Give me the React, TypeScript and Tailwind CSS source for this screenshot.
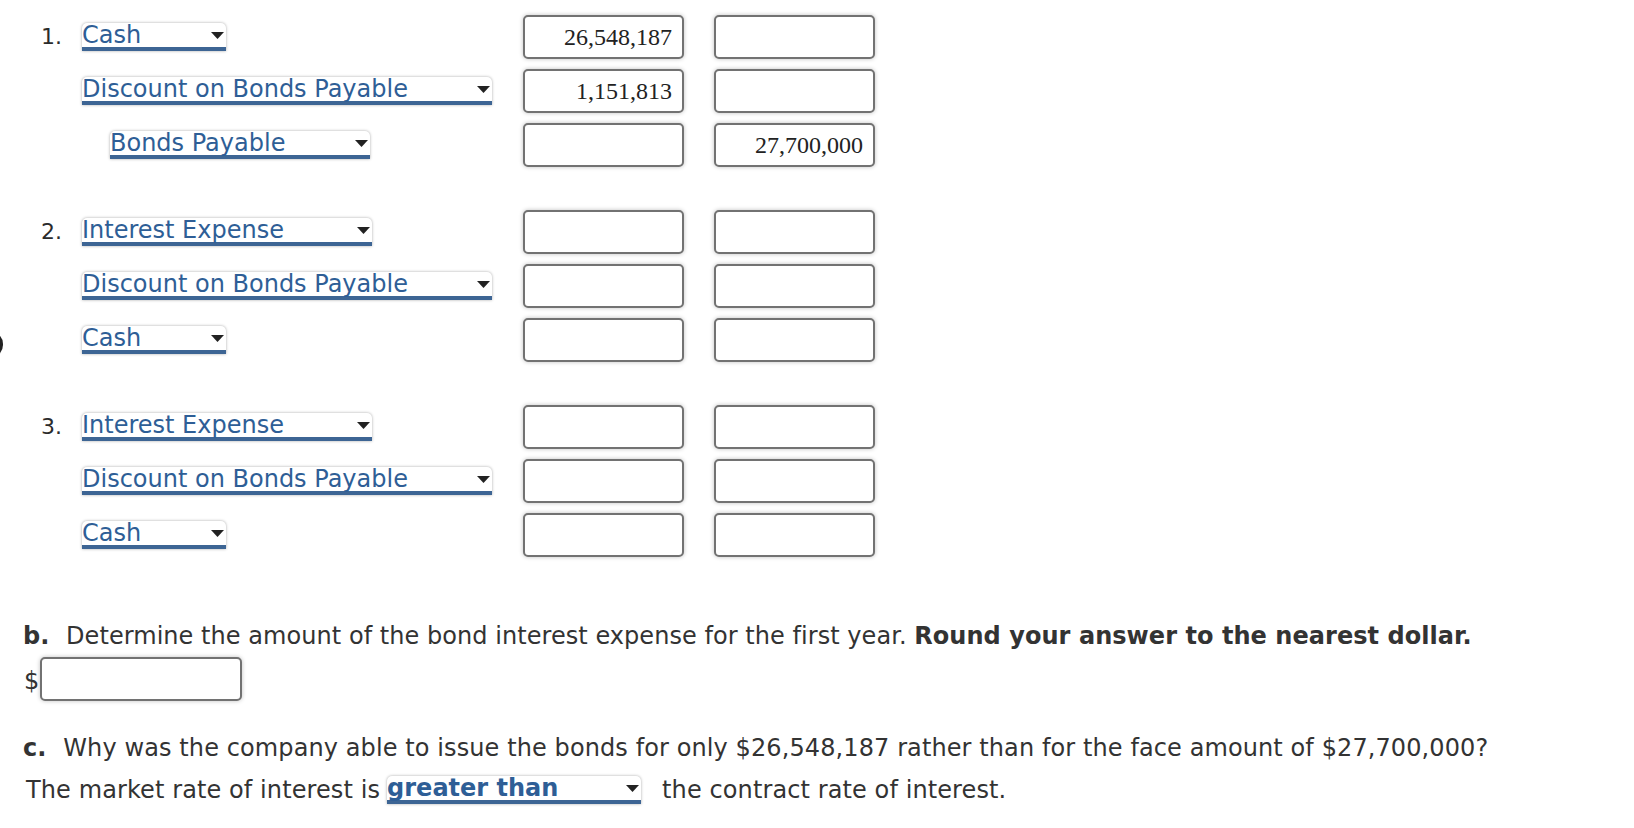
import React from "react";

type Entry = {
  label?: string;
  account: string;
  width: number;
  indent?: boolean;
  debit?: string;
  credit?: string;
};

const groups: Entry[][] = [
  [
    { label: "1.", account: "Cash", width: 144, debit: "26,548,187" },
    { account: "Discount on Bonds Payable", width: 410, debit: "1,151,813" },
    { account: "Bonds Payable", width: 260, indent: true, credit: "27,700,000" },
  ],
  [
    { label: "2.", account: "Interest Expense", width: 290 },
    { account: "Discount on Bonds Payable", width: 410 },
    { account: "Cash", width: 144 },
  ],
  [
    { label: "3.", account: "Interest Expense", width: 290 },
    { account: "Discount on Bonds Payable", width: 410 },
    { account: "Cash", width: 144 },
  ],
];

function Arrow() {
  return (
    <svg width="13" height="7" viewBox="0 0 13 7" className="shrink-0">
      <path d="M0 0 H13 L6.5 7 Z" fill="#222" />
    </svg>
  );
}

function Select({
  value,
  width,
  bold,
}: {
  value: string;
  width: number;
  bold?: boolean;
}) {
  return (
    <div
      className={`flex items-center justify-between h-[28px] border-b-4 border-[#3d6594] bg-white rounded-t-[5px] shadow-[0_0_3px_rgba(0,0,0,0.35)] pr-[2px] text-[24px] leading-[24px] text-[#2e5e96] ${
        bold ? "font-bold" : ""
      }`}
      style={{ width }}
    >
      <span className="whitespace-nowrap">{value}</span>
      <Arrow />
    </div>
  );
}

function AmountBox({ value, w = "w-[161px]" }: { value?: string; w?: string }) {
  return (
    <div
      className={`${w} h-[44px] flex items-center justify-end pr-[10px] bg-white border-2 border-[#727272] rounded-[5px] shadow-[0_0_4px_rgba(0,0,0,0.25)] font-['Liberation_Serif',serif] text-[24px] text-[#222]`}
    >
      {value}
    </div>
  );
}

export default function App() {
  return (
    <div className="relative min-h-screen bg-white text-[#333] font-['DejaVu_Sans',Verdana,sans-serif]">
      {/* cut-off bracket on the left edge */}
      <span className="absolute left-[-10px] top-[331px] w-[13px] h-[27px] rounded-r-full border-r-[3px] border-[#222]" />

      {/* Journal entries */}
      <div className="pt-[15px] flex flex-col gap-[43px]">
        {groups.map((rows, gi) => (
          <div key={gi} className="flex flex-col gap-[10px]">
            {rows.map((r, ri) => (
              <div key={ri} className="flex items-center h-[44px]">
                <div className="w-[523px] flex items-center">
                  <div className="w-[82px] pl-[41px] text-[22px] leading-[24px] text-[#2b2b2b]">
                    {r.label}
                  </div>
                  <div className={r.indent ? "ml-[28px]" : ""}>
                    <Select value={r.account} width={r.width} />
                  </div>
                </div>
                <AmountBox value={r.debit} />
                <div className="ml-[30px]">
                  <AmountBox value={r.credit} />
                </div>
              </div>
            ))}
          </div>
        ))}
      </div>

      {/* Part b */}
      <div className="pl-[23px] mt-[65px] text-[24px] leading-[28px] whitespace-nowrap tracking-[0.05px]">
        <span className="font-bold mr-[9px]">b.</span> Determine the amount of the bond
        interest expense for the first year.{" "}
        <span className="font-bold">Round your answer to the nearest dollar.</span>
      </div>
      <div className="pl-[24px] mt-[7px] flex items-center">
        <span className="text-[24px] leading-[28px] mt-[4px]">$</span>
        <div className="ml-[1px]">
          <AmountBox w="w-[202px]" />
        </div>
      </div>

      {/* Part c */}
      <div className="pl-[23px] mt-[33px] text-[24px] leading-[28px] whitespace-nowrap tracking-[0.1px]">
        <span className="font-bold mr-[9px]">c.</span> Why was the company able to issue the
        bonds for only $26,548,187 rather than for the face amount of $27,700,000?
      </div>
      <div className="pl-[26px] mt-[14px] flex items-center text-[24px] leading-[28px] whitespace-nowrap tracking-[0.1px]">
        <span>The market rate of interest is</span>
        <div className="ml-[7px] tracking-normal">
          <Select value="greater than" width={254} bold />
        </div>
        <span className="ml-[21px]">the contract rate of interest.</span>
      </div>
    </div>
  );
}
